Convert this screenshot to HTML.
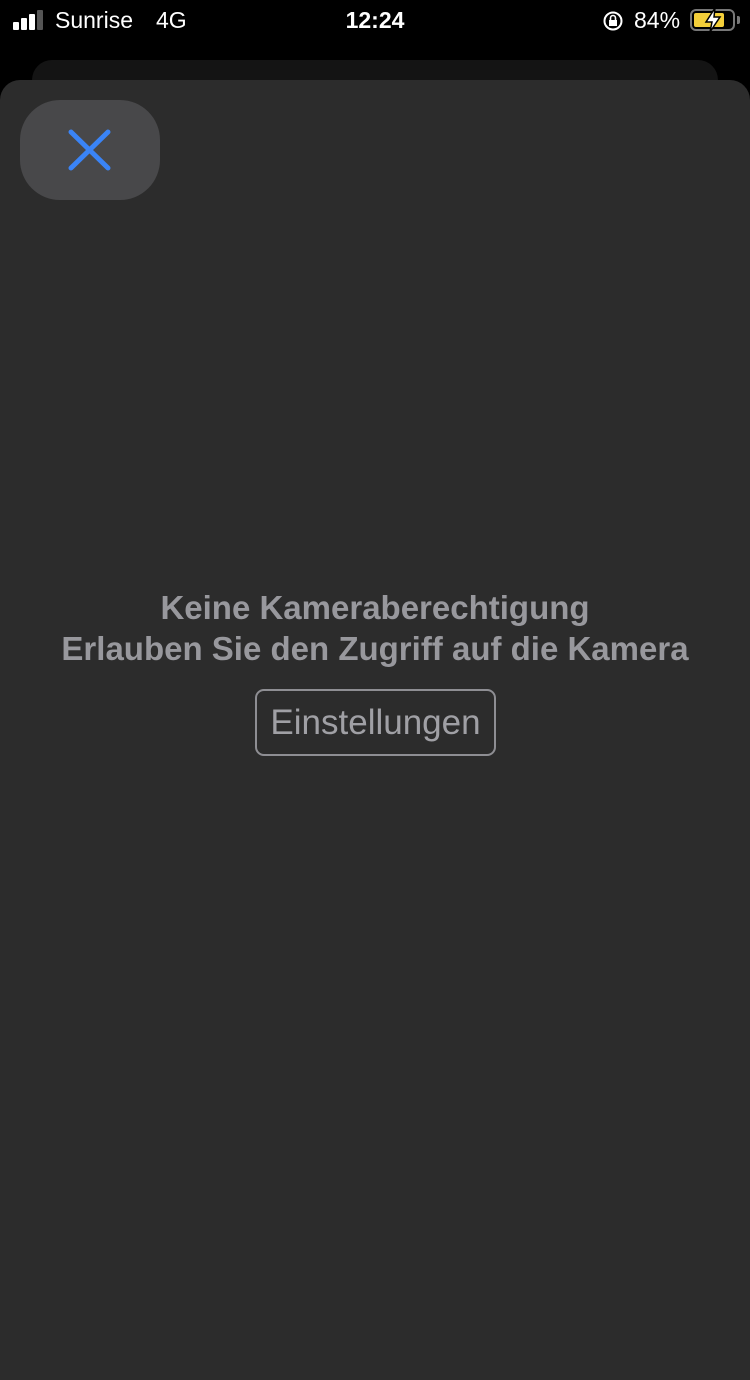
<!DOCTYPE html>
<html><head><meta charset="utf-8"><style>
*{margin:0;padding:0;box-sizing:border-box}
body{width:750px;height:1334px;background:#000;position:relative;overflow:hidden;font-family:"Liberation Sans",sans-serif}
.sb{position:absolute;top:0;left:0;width:750px;height:40px;color:#fff;font-size:23px}
.back{position:absolute;left:32px;top:60px;width:686px;height:100px;background:#141414;border-radius:20px}
.sheet{position:absolute;left:0;top:80px;width:750px;height:1300px;background:#2c2c2c;border-radius:20px 20px 0 0}
.close{position:absolute;left:20px;top:100px;width:140px;height:100px;background:#48484a;border-radius:40px}
.t{position:absolute;left:0;width:750px;text-align:center;color:#98989d;font-weight:bold;font-size:33px;white-space:nowrap}
.btn{position:absolute;left:255px;top:689px;width:241px;height:67px;border:2px solid #8e8e93;border-radius:9px;color:#a0a0a5;font-size:35px;text-align:center;line-height:63px;white-space:nowrap}
</style></head><body>
<div class="sb">
  <div style="position:absolute;left:13px;top:22px;width:6px;height:8px;background:#fff;border-radius:1px"></div>
  <div style="position:absolute;left:21px;top:18px;width:6px;height:12px;background:#fff;border-radius:1px"></div>
  <div style="position:absolute;left:29px;top:14px;width:6px;height:16px;background:#fff;border-radius:1px"></div>
  <div style="position:absolute;left:37px;top:10px;width:6px;height:20px;background:#555;border-radius:1px"></div>
  <div style="position:absolute;left:55px;top:7px">Sunrise</div>
  <div style="position:absolute;left:156px;top:7px">4G</div>
  <div style="position:absolute;left:0;width:750px;text-align:center;top:7px;font-weight:bold">12:24</div>
  <svg style="position:absolute;left:602px;top:10px" width="22" height="22" viewBox="0 0 22 22"><circle cx="11" cy="11" r="8.5" fill="none" stroke="#fff" stroke-width="2"/><rect x="7" y="10" width="8" height="6" fill="#fff"/><path d="M8.5 10V8a2.5 2.5 0 0 1 5 0v2" fill="none" stroke="#fff" stroke-width="1.6"/></svg>
  <div style="position:absolute;left:634px;top:7px">84%</div>
  <div style="position:absolute;left:690px;top:9px;width:45px;height:22px;border:2px solid #777;border-radius:6px"></div>
  <div style="position:absolute;left:694px;top:13px;width:30px;height:14px;background:#f4cf3a;border-radius:2px"></div>
  <div style="position:absolute;left:737px;top:16px;width:3px;height:8px;background:#777;border-radius:0 2px 2px 0"></div>
  <svg style="position:absolute;left:702px;top:6px" width="22" height="28" viewBox="0 0 22 28"><path d="M13 2L4 16h6l-2 10 10-15h-6z" fill="#fff" stroke="#000" stroke-width="1.5"/></svg>
</div>
<div class="back"></div>
<div class="sheet"></div>
<div class="close"><svg width="140" height="100" viewBox="0 0 140 100"><path d="M51 32L88 68M88 32L51 68" stroke="#3a84f7" stroke-width="5" stroke-linecap="round"/></svg></div>
<div class="t" style="top:589px">Keine Kameraberechtigung</div>
<div class="t" style="top:630px">Erlauben Sie den Zugriff auf die Kamera</div>
<div class="btn">Einstellungen</div>
</body></html>
